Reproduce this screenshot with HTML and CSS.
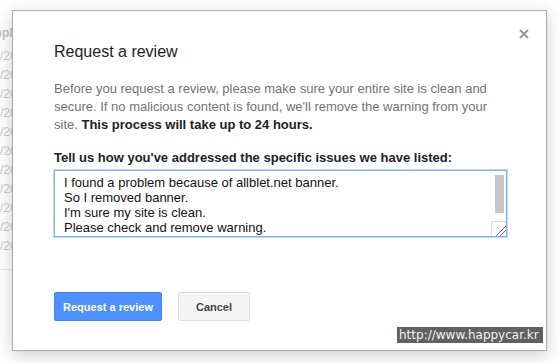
FILE: index.html
```html
<!DOCTYPE html>
<html lang="en">
<head>
<meta charset="UTF-8">
<meta name="viewport" content="width=device-width, initial-scale=1.0">
<title>Request a review</title>
<link rel="stylesheet" href="styles.css">
</head>
<body>
    <div class="page">
        <div class="page-head">Example</div>
        <ul class="page-rows">
            <li>12/12/2012</li>
            <li>12/12/2012</li>
            <li>12/12/2012</li>
            <li>12/12/2012</li>
            <li>12/12/2012</li>
            <li>12/12/2012</li>
            <li>12/12/2012</li>
            <li>12/12/2012</li>
            <li>12/12/2012</li>
            <li>12/12/2012</li>
            <li>12/12/2012</li>
        </ul>
    </div>

    <div class="dialog">
        <span class="close">
            <svg width="10" height="10" viewBox="0 0 10 10"><path d="M1 1L9 9M9 1L1 9" stroke="#9a9a9a" stroke-width="2"/></svg>
        </span>
        <h2 class="title">Request a review</h2>
        <p class="intro">Before you request a review, please make sure your entire site is clean and secure. If no malicious content is found, we'll remove the warning from your site. <strong>This process will take up to 24 hours.</strong></p>
        <label class="label" for="issues">Tell us how you've addressed the specific issues we have listed:</label>
        <div class="field">
            <textarea id="issues" class="issues">I found a problem because of allblet.net banner.
So I removed banner.
I'm sure my site is clean.
Please check and remove warning.
</textarea>
            <span class="thumb"></span>
        </div>
        <div class="actions">
            <button class="btn btn-primary">Request a review</button>
            <button class="btn btn-cancel">Cancel</button>
        </div>
    </div>

    <div class="watermark">http://www.happycar.kr</div>
</body>
</html>
```

FILE: styles.css
```css
body {
    font-family: "Liberation Sans", Arial, sans-serif;
    margin: 0;
    padding: 0;
    width: 560px;
    height: 363px;
    overflow: hidden;
    background: #fff;
}
.page {
    margin-left: -30px;
    padding-top: 25px;
    width: 300px;
    font-size: 12px;
    color: #c9c9c9;
    border-bottom: 1px solid #ececec;
    padding-bottom: 13px;
}
.page-head {
    line-height: 16px;
    font-weight: bold;
    color: #c4c4c4;
    margin-bottom: 6px;
}
.page-rows {
    list-style: none;
    margin: 0;
    padding: 0;
}
.page-rows li {
    line-height: 19px;
}
.dialog {
    position: absolute;
    left: 12px;
    top: 10px;
    width: 535px;
    height: 341px;
    box-sizing: border-box;
    background: #fff;
    border: 1px solid #acacac;
    box-shadow: 0 4px 16px rgba(0, 0, 0, 0.2);
    padding: 31px 40px 0 41px;
}
.close {
    position: absolute;
    right: 17px;
    top: 18px;
    width: 10px;
    height: 10px;
}
.close svg {
    display: block;
}
.title {
    margin: 0 0 18px;
    font-size: 16px;
    line-height: 20px;
    font-weight: normal;
    color: #222;
}
.intro {
    margin: 0;
    font-size: 13px;
    line-height: 18px;
    color: #737373;
}
.intro strong {
    color: #222;
}
.label {
    display: block;
    margin-top: 15px;
    font-size: 13px;
    line-height: 18px;
    font-weight: bold;
    color: #222;
}
.field {
    position: relative;
    margin-top: 3px;
    width: 453px;
}
.issues {
    display: block;
    width: 453px;
    height: 67px;
    box-sizing: border-box;
    padding: 4px 22px 4px 9px;
    font-family: "Liberation Sans", Arial, sans-serif;
    font-size: 13px;
    line-height: 15px;
    color: #111;
    border: 1px solid #86b0ec;
    box-shadow: 0 0 0 1px rgba(150, 188, 240, 0.6);
    outline: none;
    resize: both;
}
.issues::-webkit-resizer {
    background: linear-gradient(135deg, transparent 62%, #777 62%, #777 67%, transparent 67%, transparent 76%, #777 76%, #777 81%, transparent 81%), #fff;
    border-top: 1px solid #ddd;
    border-left: 1px solid #ddd;
}
.thumb {
    position: absolute;
    right: 3px;
    top: 5px;
    width: 9px;
    height: 38px;
    background: #c6c6c6;
}
.actions {
    margin-top: 55px;
    display: flex;
    gap: 16px;
}
.btn {
    height: 29px;
    padding: 0 8px;
    border-radius: 2px;
    font-family: "Liberation Sans", Arial, sans-serif;
    font-size: 11px;
    font-weight: bold;
    cursor: pointer;
}
.btn-primary {
    width: 108px;
    background-color: #4d90fe;
    border: 1px solid #3f85f5;
    color: #fff;
}
.btn-cancel {
    width: 72px;
    background-color: #f5f5f5;
    border: 1px solid #dcdcdc;
    color: #444;
}
.watermark {
    position: absolute;
    left: 397px;
    top: 327px;
    width: 146px;
    height: 16px;
    box-sizing: border-box;
    background: #616161;
    color: #f2f2f2;
    font-family: "DejaVu Sans", Verdana, sans-serif;
    font-size: 12px;
    line-height: 16px;
    padding-left: 2px;
    white-space: nowrap;
}
```
